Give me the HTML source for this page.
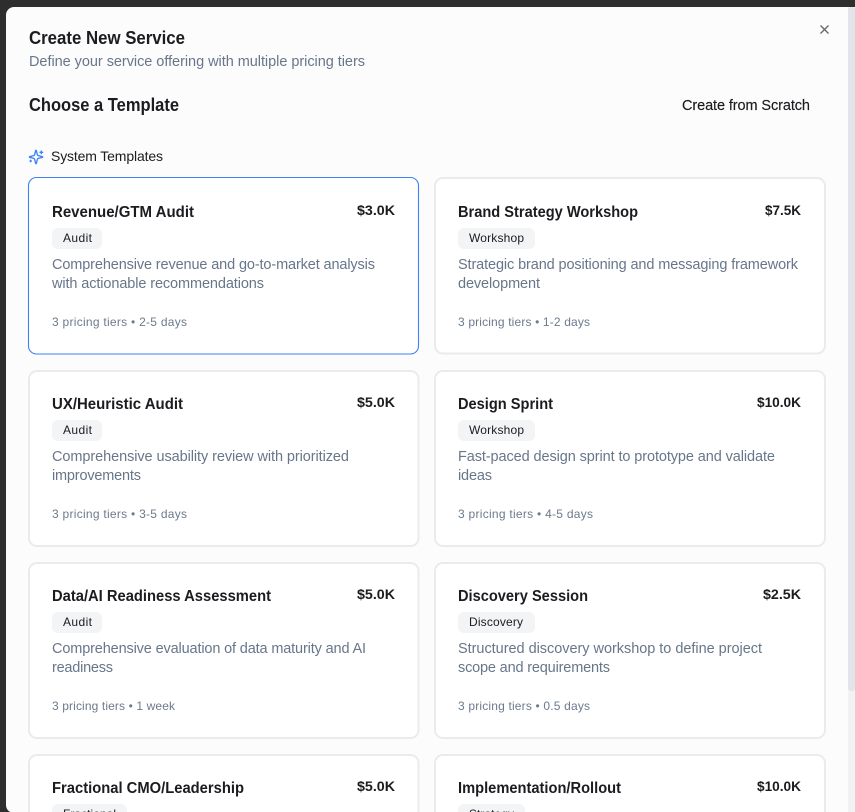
<!DOCTYPE html>
<html><head><meta charset="utf-8"><title>Create New Service</title>
<style>
html,body{margin:0;padding:0;width:855px;height:812px;overflow:hidden;background:#2e2e2e}
svg{display:block;font-family:"Liberation Sans",Arial,sans-serif}
.h{font-size:18px;font-weight:700;fill:#1c1c20}
.t{font-size:15.500px;font-weight:700;fill:#1c1c20}
.p{font-size:14px;font-weight:700;fill:#1c1c20}
.g{font-size:12px;fill:#1c1c20}
.d{font-size:14.500px;fill:#68768a}
.m{font-size:12px;fill:#6c7a8c}
.c{fill:#fff;stroke:#ebebef;stroke-width:2}
.b{fill:#f3f4f6}
</style></head><body>
<svg width="855" height="812" viewBox="0 0 855 812" xmlns="http://www.w3.org/2000/svg">
<rect width="855" height="812" fill="#2e2e2e"/>
<rect x="6" y="7" width="860" height="806" rx="8" fill="#fcfcfc"/>
<rect x="848" y="7" width="7" height="805" fill="#f1f2f4"/>
<rect x="848" y="7" width="7" height="684" rx="3" fill="#e1e4e9"/>
<path d="M820.500 25.500l8 8M828.500 25.500l-8 8" stroke="#666" stroke-width="1.300" fill="none"/>
<text class="h" x="29" y="44" textLength="156" lengthAdjust="spacingAndGlyphs">Create New Service</text>
<text x="29" y="66" font-size="14.500" fill="#68768a" textLength="336">Define your service offering with multiple pricing tiers</text>
<text class="h" x="29" y="111" textLength="150" lengthAdjust="spacingAndGlyphs">Choose a Template</text>
<text x="682" y="110" font-size="14.500" fill="#1c1c20" stroke="#1c1c20" stroke-width=".15" textLength="128">Create from Scratch</text>
<g transform="translate(28 149) scale(.6667)" fill="none" stroke="#3b82f6" stroke-width="2" stroke-linejoin="round" stroke-linecap="round">
<path d="M9.937 15.500A2 2 0 0 0 8.500 14.063l-6.135-1.582a.5.5 0 0 1 0-.962L8.500 9.936A2 2 0 0 0 9.937 8.500l1.582-6.135a.5.5 0 0 1 .963 0L14.063 8.500A2 2 0 0 0 15.500 9.937l6.135 1.581a.5.5 0 0 1 0 .964L15.500 14.063a2 2 0 0 0-1.437 1.437l-1.582 6.135a.5.5 0 0 1-.963 0z"/>
<path d="M20 3v4M22 5h-4M4 17v2M5 18H3"/>
</g>
<text x="51" y="161" font-size="14" fill="#1c1c20" textLength="112">System Templates</text>

<!-- Row 1 -->
<rect x="28.500" y="177.500" width="390" height="176.500" rx="8" fill="#fff" stroke="#3b82f6" stroke-width="1.100"/>
<text class="t" x="52" y="217" textLength="142" lengthAdjust="spacingAndGlyphs">Revenue/GTM Audit</text>
<text class="p" x="357" y="215" textLength="38" lengthAdjust="spacingAndGlyphs">$3.0K</text>
<rect class="b" x="52" y="228" width="50" height="21" rx="6"/>
<text class="g" x="63" y="242" textLength="29">Audit</text>
<text class="d" x="52" y="269" textLength="323">Comprehensive revenue and go-to-market analysis</text>
<text class="d" x="52" y="288" textLength="212">with actionable recommendations</text>
<text class="m" x="52" y="326" textLength="135">3 pricing tiers • 2-5 days</text>

<rect class="c" x="435" y="178" width="390" height="175.500" rx="8"/>
<text class="t" x="458" y="217" textLength="180" lengthAdjust="spacingAndGlyphs">Brand Strategy Workshop</text>
<text class="p" x="765" y="215" textLength="36" lengthAdjust="spacingAndGlyphs">$7.5K</text>
<rect class="b" x="458" y="228" width="77" height="21" rx="6"/>
<text class="g" x="469" y="242" textLength="55">Workshop</text>
<text class="d" x="458" y="269" textLength="340">Strategic brand positioning and messaging framework</text>
<text class="d" x="458" y="288" textLength="82">development</text>
<text class="m" x="458" y="326" textLength="132">3 pricing tiers • 1-2 days</text>

<!-- Row 2 -->
<rect class="c" x="29" y="371" width="389.500" height="175" rx="8"/>
<text class="t" x="52" y="409" textLength="131" lengthAdjust="spacingAndGlyphs">UX/Heuristic Audit</text>
<text class="p" x="357" y="407" textLength="38" lengthAdjust="spacingAndGlyphs">$5.0K</text>
<rect class="b" x="52" y="420" width="50" height="21" rx="6"/>
<text class="g" x="63" y="434" textLength="29">Audit</text>
<text class="d" x="52" y="461" textLength="297">Comprehensive usability review with prioritized</text>
<text class="d" x="52" y="480" textLength="89">improvements</text>
<text class="m" x="52" y="518" textLength="135">3 pricing tiers • 3-5 days</text>

<rect class="c" x="435" y="371" width="390" height="175" rx="8"/>
<text class="t" x="458" y="409" textLength="95" lengthAdjust="spacingAndGlyphs">Design Sprint</text>
<text class="p" x="757" y="407" textLength="44" lengthAdjust="spacingAndGlyphs">$10.0K</text>
<rect class="b" x="458" y="420" width="77" height="21" rx="6"/>
<text class="g" x="469" y="434" textLength="55">Workshop</text>
<text class="d" x="458" y="461" textLength="317">Fast-paced design sprint to prototype and validate</text>
<text class="d" x="458" y="480" textLength="34">ideas</text>
<text class="m" x="458" y="518" textLength="135">3 pricing tiers • 4-5 days</text>

<!-- Row 3 -->
<rect class="c" x="29" y="563" width="389.500" height="175" rx="8"/>
<text class="t" x="52" y="601" textLength="219" lengthAdjust="spacingAndGlyphs">Data/AI Readiness Assessment</text>
<text class="p" x="357" y="599" textLength="38" lengthAdjust="spacingAndGlyphs">$5.0K</text>
<rect class="b" x="52" y="612" width="50" height="21" rx="6"/>
<text class="g" x="63" y="626" textLength="29">Audit</text>
<text class="d" x="52" y="653" textLength="314">Comprehensive evaluation of data maturity and AI</text>
<text class="d" x="52" y="672" textLength="61">readiness</text>
<text class="m" x="52" y="710" textLength="123">3 pricing tiers • 1 week</text>

<rect class="c" x="435" y="563" width="390" height="175" rx="8"/>
<text class="t" x="458" y="601" textLength="130" lengthAdjust="spacingAndGlyphs">Discovery Session</text>
<text class="p" x="763" y="599" textLength="38" lengthAdjust="spacingAndGlyphs">$2.5K</text>
<rect class="b" x="458" y="612" width="77" height="21" rx="6"/>
<text class="g" x="469" y="626" textLength="54">Discovery</text>
<text class="d" x="458" y="653" textLength="304">Structured discovery workshop to define project</text>
<text class="d" x="458" y="672" textLength="152">scope and requirements</text>
<text class="m" x="458" y="710" textLength="132">3 pricing tiers • 0.5 days</text>

<!-- Row 4 -->
<rect class="c" x="29" y="755" width="389.500" height="175" rx="8"/>
<text class="t" x="52" y="793" textLength="192" lengthAdjust="spacingAndGlyphs">Fractional CMO/Leadership</text>
<text class="p" x="357" y="791" textLength="38" lengthAdjust="spacingAndGlyphs">$5.0K</text>
<rect class="b" x="52" y="804" width="75" height="21" rx="6"/>
<text class="g" x="63" y="818" textLength="53">Fractional</text>

<rect class="c" x="435" y="755" width="390" height="175" rx="8"/>
<text class="t" x="458" y="793" textLength="163" lengthAdjust="spacingAndGlyphs">Implementation/Rollout</text>
<text class="p" x="757" y="791" textLength="44" lengthAdjust="spacingAndGlyphs">$10.0K</text>
<rect class="b" x="458" y="804" width="67" height="21" rx="6"/>
<text class="g" x="469" y="818" textLength="45">Strategy</text>
</svg>
</body></html>
